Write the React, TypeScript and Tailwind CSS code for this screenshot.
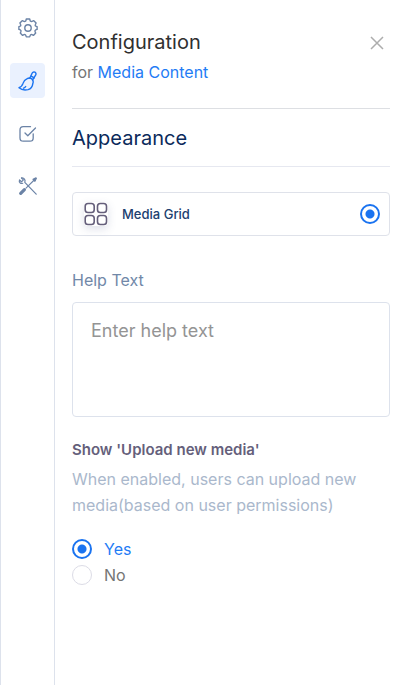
import { useState } from "react";
import type { ReactNode } from "react";

function GearIcon() {
  return (
    <svg width="20" height="20" viewBox="0 0 20 20" fill="none" stroke="currentColor" strokeWidth="1.4" strokeLinejoin="round">
      <path d="M8.3 1h3.4l.5 1.900c.9.800 1.500.9 2.300.300l1.300-.5 2.300 2.300-.7 1.500c-.4.800-.2 1.400.500 1.700l1.200.4v2.800l-1.400.5c-.8.400-1 1-.6 1.900l.6 1.300-2.300 2.300-1.400-.7c-.8-.4-1.500-.1-1.800.7l-.5 1.500H8.300l-.5-1.500c-.3-.8-1-1.100-1.800-.7l-1.400.7-2.300-2.300.6-1.300c.4-.9.2-1.500-.6-1.900L.9 11.400V8.600l1.200-.4c.7-.3.900-.9.500-1.700l-.7-1.500 2.300-2.300 1.300.5c.8.600 1.400.5 2.300-.3z" />
      <circle cx="10" cy="10" r="3.200" />
    </svg>
  );
}

function BrushIcon() {
  return (
    <svg width="20" height="20" viewBox="0 0 20 20" fill="none" stroke="currentColor" strokeWidth="1.400" strokeLinecap="round" strokeLinejoin="round">
      <path d="M11.800 7.300l2.300-5c.6-1.200 1.700-1.700 2.800-1.100s1.400 1.900.7 3L14.500 9" />
      <path d="M13.200 5.200l3 1.700" />
      <path d="M9.200 7.600c1.700-.9 3.500-.6 4.700.5 1.200 1.200 1.600 2.900.9 4.500-.3 2.900-1.900 5.200-4.700 6-3.100.8-6.700.200-9.100-1.900 2.400-.7 3.300-2 4-4.300.6-2.200 2.100-3.900 4.200-4.800z" />
      <path d="M5.600 17.200c1-.4 1.600-.9 2.100-1.700" />
    </svg>
  );
}

function CheckIcon() {
  return (
    <svg width="20" height="20" viewBox="0 0 20 20" fill="none" stroke="currentColor" strokeWidth="1.300" strokeLinecap="round" strokeLinejoin="round">
      <path d="M12.500 2.700H5.200C3 2.700 2 3.700 2 5.900v8c0 2.200 1 3.200 3.200 3.200h6.800c2.200 0 3.200-1 3.200-3.200V9.800" />
      <path d="M7 9l2.800 2.700 7.700-7.700" />
    </svg>
  );
}

function ToolsIcon() {
  return (
    <svg width="20" height="20" viewBox="0 0 20 20" fill="none" stroke="currentColor" strokeWidth="1.200" strokeLinecap="round" strokeLinejoin="round">
      <path d="M3.500 1l1.900 1.900-1.900 1.900-2-1.800c-.5 1.300-.1 2.400.7 3 .8.600 1.700.6 2.500.3" />
      <path d="M3.500 1c1.200-.2 2.400.3 3 1.200.7 1 .7 2.100.3 3.200L18.200 17.200" />
      <path d="M2.700 16.400l3.700-3.700" strokeWidth="3.200" />
      <path d="M8 11.200l8.200-8.200" strokeWidth="1.100" />
      <path d="M15 2.400l3-1.500.4.400-1.500 3z" fill="currentColor" />
    </svg>
  );
}

function GridIcon() {
  return (
    <svg width="24" height="24" viewBox="0 0 24 24" fill="none" stroke="currentColor" strokeWidth="1.600">
      <rect x="1.200" y="1.500" width="9" height="9" rx="2.800" />
      <rect x="13.500" y="1.500" width="9" height="9" rx="2.800" />
      <rect x="1.200" y="13.500" width="9" height="9" rx="2.800" />
      <rect x="13.500" y="13.500" width="9" height="9" rx="2.800" />
    </svg>
  );
}

const TABS: { id: string; label: string; icon: ReactNode }[] = [
  { id: "settings", label: "Settings", icon: <GearIcon /> },
  { id: "appearance", label: "Appearance", icon: <BrushIcon /> },
  { id: "validation", label: "Validation", icon: <CheckIcon /> },
  { id: "advanced", label: "Advanced", icon: <ToolsIcon /> },
];

const RADIO =
  "m-0 size-5 shrink-0 appearance-none rounded-full border border-[#dcdce6] bg-white checked:border-2 checked:border-[#1a73f0] checked:bg-[radial-gradient(circle,#1a73f0_4px,transparent_5px)]";

export default function App() {
  const [tab, setTab] = useState("appearance");
  const [upload, setUpload] = useState("yes");
  const [helpText, setHelpText] = useState("");

  return (
    <div className="flex min-h-screen border-l border-[#dde2ec] bg-white font-['Inter',sans-serif]">
      <nav className="flex w-[54px] shrink-0 flex-col items-center gap-[18px] border-r border-[#dde2ec] pt-[10px]">
        {TABS.map((t) => (
          <button
            key={t.id}
            type="button"
            aria-label={t.label}
            onClick={() => setTab(t.id)}
            className={
              t.id === tab
                ? "flex size-[35px] items-center justify-center rounded bg-[#eaf1fe] text-[#1a73f0]"
                : "flex size-[35px] items-center justify-center rounded text-[#6b83a6]"
            }
          >
            {t.icon}
          </button>
        ))}
      </nav>

      <main className="min-w-0 flex-1 px-[17px]">
        <header className="flex items-start justify-between border-b border-[#dddfe3] pt-7 pb-6">
          <div>
            <h1 className="text-xl leading-7 text-[#303030]">Configuration</h1>
            <p className="mt-1 text-base leading-6 text-[#757575]">
              for <a href="#media-content" className="text-[#1f7cf5]">Media Content</a>
            </p>
          </div>
          <button type="button" aria-label="Close" className="mt-2 mr-1.5 text-[#adadad]">
            <svg width="14" height="14" viewBox="0 0 14 14" stroke="currentColor" strokeWidth="1.500">
              <path d="M1 1l12 12M13 1L1 13" />
            </svg>
          </button>
        </header>

        <h2 className="border-b border-[#e6e8f0] pt-[15px] pb-[14px] text-xl leading-7 text-[#0b2a5b]">Appearance</h2>

        <label className="mt-[25px] flex h-11 items-center rounded border border-[#dfe2ea] pr-[9px] pl-[11px]">
          <span className="rounded text-[#655f7b] shadow-[0_3px_8px_rgba(80,90,140,0.18)]">
            <GridIcon />
          </span>
          <span className="ml-[14px] flex-1 text-[13px] leading-5 font-medium text-[#20406f]">Media Grid</span>
          <input type="radio" name="appearance" defaultChecked className={RADIO} />
        </label>

        <label htmlFor="help-text" className="mt-8 block text-base leading-6 text-[#7188a8]">
          Help Text
        </label>
        <textarea
          id="help-text"
          value={helpText}
          onChange={(e) => setHelpText(e.target.value)}
          placeholder="Enter help text"
          className="mt-[10px] block h-[115px] w-full resize-none rounded border border-[#dde2ec] px-[18px] py-[14px] text-lg leading-7 text-[#303030] placeholder:text-[#949494]"
        />

        <fieldset className="mt-[21px]">
          <legend className="text-[15px] leading-6 font-semibold text-[#655f7b]">Show 'Upload new media'</legend>
          <p className="mt-1 text-base leading-[26px] text-[#aab8cc]">
            When enabled, users can upload new media(based on user permissions)
          </p>
          <div className="mt-[18px] flex flex-col">
            <label className="flex h-[26px] items-center gap-3 text-base text-[#757575] has-checked:text-[#1f7cf5]">
              <input type="radio" name="upload" checked={upload === "yes"} onChange={() => setUpload("yes")} className={RADIO} />
              Yes
            </label>
            <label className="flex h-[26px] items-center gap-3 text-base text-[#757575] has-checked:text-[#1f7cf5]">
              <input type="radio" name="upload" checked={upload === "no"} onChange={() => setUpload("no")} className={RADIO} />
              No
            </label>
          </div>
        </fieldset>
      </main>
    </div>
  );
}
